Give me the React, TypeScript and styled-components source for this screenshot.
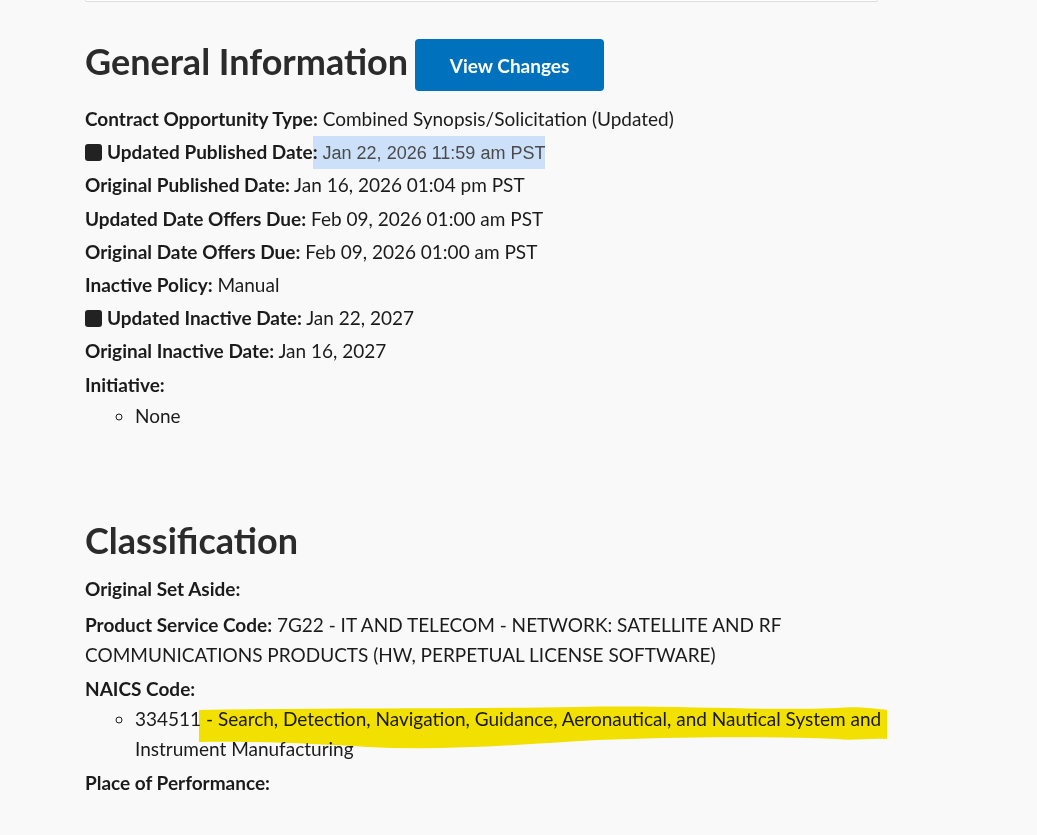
import styled, { createGlobalStyle } from "styled-components";

const GlobalStyle = createGlobalStyle`
  body {
    margin: 0;
    background: #f9f9f9;
    font-family: Lato, "Noto Sans", sans-serif;
    color: #1b1b1b;
  }
`;

const Page = styled.div`
  width: 815px;
  padding: 0 0 60px 85px;
`;

const CardEdge = styled.div`
  width: 791px;
  height: 1px;
  background: #fff;
  border: 1px solid #dcdee0;
  border-top: none;
  border-radius: 0 0 4px 4px;
`;

const Section = styled.section<{ top: number }>`
  margin-top: ${({ top }) => top}px;
`;

const HeadingRow = styled.div`
  display: flex;
  align-items: flex-start;
  gap: 7px;
`;

const Heading = styled.h2`
  margin: 0;
  font-size: 36px;
  line-height: 44px;
  font-weight: 700;
  color: #2b2b2b;
`;

const Button = styled.button`
  width: 189px;
  height: 52px;
  border: none;
  border-radius: 4px;
  background: #0071bc;
  color: #fff;
  font-family: inherit;
  font-size: 19px;
  font-weight: 700;
  cursor: pointer;
`;

const Fields = styled.div<{ gap: number; top: number }>`
  display: flex;
  flex-direction: column;
  gap: ${({ gap }) => gap}px;
  margin-top: ${({ top }) => top}px;
`;

const Field = styled.div<{ extra?: number }>`
  height: 30px;
  font-size: 19px;
  line-height: 30px;
  display: flex;
  align-items: center;
  white-space: nowrap;
  margin-bottom: ${({ extra }) => extra ?? 0}px;
`;

const FieldText = styled.div`
  font-size: 19px;
  line-height: 30px;
`;

const Label = styled.span`
  font-weight: 700;
`;

const ChangeMark = styled.span`
  display: inline-block;
  width: 17px;
  height: 17px;
  border-radius: 3px;
  background: #222;
  margin-right: 5px;
`;

const Selected = styled.span`
  background: #cce1f9;
  line-height: 31px;
`;

const SelectedValue = styled.span`
  font-family: "Liberation Sans", Arial, sans-serif;
  font-size: 18px;
  color: #4a4a4a;
`;

const Bullets = styled.ul<{ lh: number }>`
  margin: 0;
  padding-left: 50px;
  list-style: circle;
  font-size: 19px;
  line-height: ${({ lh }) => lh}px;
`;

const Item = styled.li`
  position: relative;
`;

const Highlighter = styled.svg`
  position: absolute;
  left: 62px;
  top: -2px;
  width: 692px;
  height: 50px;
  mix-blend-mode: multiply;
  pointer-events: none;
`;

export default function App() {
  return (
    <>
      <GlobalStyle />
      <Page>
        <CardEdge />
        <Section top={37}>
          <HeadingRow>
            <Heading>General Information</Heading>
            <Button>View Changes</Button>
          </HeadingRow>
          <Fields gap={3.2} top={13}>
            <Field>
              <Label>Contract Opportunity Type:</Label>&nbsp;Combined
              Synopsis/Solicitation (Updated)
            </Field>
            <Field>
              <ChangeMark />
              <Label>Updated Published Date</Label>
              <Selected>
                <Label>:</Label>
                <SelectedValue> Jan 22, 2026 11:59 am PST</SelectedValue>
              </Selected>
            </Field>
            <Field>
              <Label>Original Published Date:</Label>&nbsp;Jan 16, 2026 01:04 pm PST
            </Field>
            <Field>
              <Label>Updated Date Offers Due:</Label>&nbsp;Feb 09, 2026 01:00 am PST
            </Field>
            <Field>
              <Label>Original Date Offers Due:</Label>&nbsp;Feb 09, 2026 01:00 am PST
            </Field>
            <Field>
              <Label>Inactive Policy:</Label>&nbsp;Manual
            </Field>
            <Field>
              <ChangeMark />
              <Label>Updated Inactive Date:</Label>&nbsp;Jan 22, 2027
            </Field>
            <Field>
              <Label>Original Inactive Date:</Label>&nbsp;Jan 16, 2027
            </Field>
            <div>
              <Field>
                <Label>Initiative:</Label>
              </Field>
              <Bullets lh={31}>
                <Item>None</Item>
              </Bullets>
            </div>
          </Fields>
        </Section>

        <Section top={87}>
          <Heading>Classification</Heading>
          <Fields gap={4} top={12}>
            <Field extra={2}>
              <Label>Original Set Aside:</Label>
            </Field>
            <FieldText>
              <Label>Product Service Code:</Label> 7G22 - IT AND TELECOM - NETWORK:
              SATELLITE AND RF COMMUNICATIONS PRODUCTS (HW, PERPETUAL LICENSE SOFTWARE)
            </FieldText>
            <div>
              <Field>
                <Label>NAICS Code:</Label>
              </Field>
              <Bullets lh={30}>
                <Item>
                  334511 - Search, Detection, Navigation, Guidance, Aeronautical, and
                  Nautical System and Instrument Manufacturing
                  <Highlighter viewBox="0 0 692 50" preserveAspectRatio="none">
                    <path
                      d="M2 8 C120 6 260 7 380 5 C480 3 560 9 640 6 C660 4 680 7 690 8 L690 37 C670 36 655 39 640 37 C560 34 470 35 400 38 C330 42 250 49 170 45 C120 42 60 39 2 40 Z"
                      fill="#f7e600"
                    />
                  </Highlighter>
                </Item>
              </Bullets>
            </div>
            <Field>
              <Label>Place of Performance:</Label>
            </Field>
          </Fields>
        </Section>
      </Page>
    </>
  );
}
